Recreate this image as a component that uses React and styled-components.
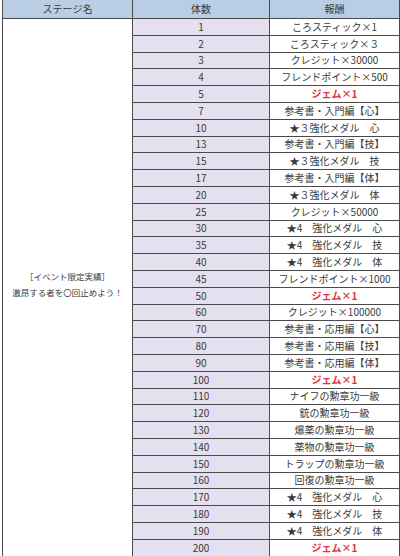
import React from "react"
import styled, { createGlobalStyle } from "styled-components"

const GlobalStyle = createGlobalStyle`
  html, body {
    margin: 0;
    padding: 0;
    background: #ffffff;
  }
  body {
    font-family: "Noto Sans CJK JP", "Noto Sans", sans-serif;
    color: #333;
  }
`

const Page = styled.div`
  width: 400px;
  height: 556px;
  overflow: hidden;
  padding-left: 2px;
  box-sizing: border-box;
`

const Table = styled.table`
  border-collapse: collapse;
  table-layout: fixed;
  width: 397px;
  font-size: 10px;
  line-height: 1;
`

const HeadCell = styled.th`
  height: 18px;
  padding: 0;
  background: #b9cde5;
  border: 1px solid #4a4a4a;
  border-top: none;
  font-weight: normal;
  color: #3a3a3a;
  text-align: center;
  vertical-align: middle;
`

const StageCell = styled.td`
  padding: 0 0 6px;
  border: 1px solid #4a4a4a;
  background: #fff;
  text-align: center;
  vertical-align: middle;
  color: #3a3a3a;
  font-size: 8.5px;
  line-height: 16px;
`

const CountCell = styled.td`
  height: 15.8px;
  padding: 0;
  background: #e4e0ef;
  border: 1px solid #4a4a4a;
  text-align: center;
  vertical-align: middle;
  color: #3a3a3a;
`

const RewardCell = styled.td`
  padding: 0;
  background: #fff;
  border: 1px solid #4a4a4a;
  text-align: center;
  vertical-align: middle;
  white-space: pre;
  color: ${(p) => (p.$gem ? "#e0303a" : "#3a3a3a")};
  font-weight: ${(p) => (p.$gem ? "bold" : "normal")};
`

const rows = [
  ["1", "ころスティック×1"],
  ["2", "ころスティック×３"],
  ["3", "クレジット×30000"],
  ["4", "フレンドポイント×500"],
  ["5", "ジェム×1", true],
  ["7", "参考書・入門編【心】"],
  ["10", "★３強化メダル　心"],
  ["13", "参考書・入門編【技】"],
  ["15", "★３強化メダル　技"],
  ["17", "参考書・入門編【体】"],
  ["20", "★３強化メダル　体"],
  ["25", "クレジット×50000"],
  ["30", "★4　強化メダル　心"],
  ["35", "★4　強化メダル　技"],
  ["40", "★4　強化メダル　体"],
  ["45", "フレンドポイント×1000"],
  ["50", "ジェム×1", true],
  ["60", "クレジット×100000"],
  ["70", "参考書・応用編【心】"],
  ["80", "参考書・応用編【技】"],
  ["90", "参考書・応用編【体】"],
  ["100", "ジェム×1", true],
  ["110", "ナイフの勲章功一級"],
  ["120", "銃の勲章功一級"],
  ["130", "爆薬の勲章功一級"],
  ["140", "薬物の勲章功一級"],
  ["150", "トラップの勲章功一級"],
  ["160", "回復の勲章功一級"],
  ["170", "★4　強化メダル　心"],
  ["180", "★4　強化メダル　技"],
  ["190", "★4　強化メダル　体"],
  ["200", "ジェム×1", true],
]

export default function App() {
  return (
    <Page>
      <GlobalStyle />
      <Table>
        <colgroup>
          <col style={{ width: 130 }} />
          <col style={{ width: 137 }} />
          <col style={{ width: 130 }} />
        </colgroup>
        <thead>
          <tr>
            <HeadCell>ステージ名</HeadCell>
            <HeadCell>体数</HeadCell>
            <HeadCell>報酬</HeadCell>
          </tr>
        </thead>
        <tbody>
          {rows.map(([count, reward, gem], i) => (
            <tr key={count}>
              {i === 0 && (
                <StageCell rowSpan={rows.length}>
                  ［イベント限定実績］
                  <br />
                  激昂する者を〇回止めよう！
                </StageCell>
              )}
              <CountCell>{count}</CountCell>
              <RewardCell $gem={gem}>{reward}</RewardCell>
            </tr>
          ))}
        </tbody>
      </Table>
    </Page>
  )
}
